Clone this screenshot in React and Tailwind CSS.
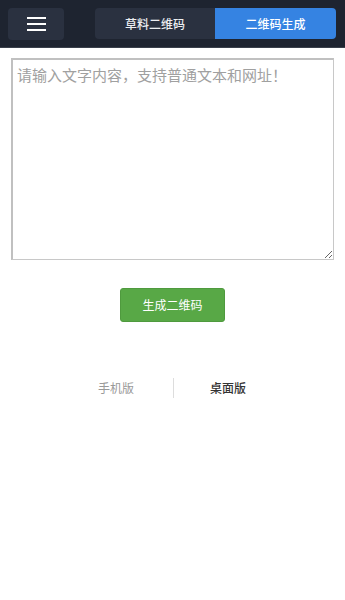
export default function App() {
  const font = { fontFamily: '"Noto Sans CJK SC", "Liberation Sans", sans-serif' };
  return (
    <div className="w-[345px] min-h-[600px] bg-white" style={font}>
      <div className="h-[48px] bg-[#1e2430] border-b border-[#3a404b] flex items-start pt-[8px] px-[8px]">
        <button className="w-[56px] h-[32px] rounded-[4px] bg-[#2a3140] flex flex-col items-center justify-center gap-[4px]">
          <span className="block w-[19px] h-[2px] bg-white"></span>
          <span className="block w-[19px] h-[2px] bg-white"></span>
          <span className="block w-[19px] h-[2px] bg-white"></span>
        </button>
        <div className="ml-[31px] flex h-[31px] rounded-[4px] overflow-hidden w-[241px]">
          <div className="w-[120px] bg-[#2a3140] text-[#eceef1] text-[12px] font-medium flex items-center justify-center">草料二维码</div>
          <div className="flex-1 bg-[#3583e2] text-white text-[12px] font-medium flex items-center justify-center">二维码生成</div>
        </div>
      </div>
      <div className="px-[11px] pt-[10px]">
        <textarea
          className="block w-[323px] h-[202px] border border-[#c8c8c8] border-l-[2px] border-t-[2px] border-l-[#c0c0c0] border-t-[#c0c0c0] px-[4px] py-[3px] text-[15px] leading-[24px] text-[#333] placeholder:text-[#a0a0a0] outline-none"
          placeholder="请输入文字内容，支持普通文本和网址！"
          style={font}
        />
      </div>
      <div className="flex justify-center pt-[28px]">
        <button className="w-[105px] h-[34px] rounded-[3px] bg-[#58a846] text-white text-[12px] border border-[#4f9a3e]">生成二维码</button>
      </div>
      <div className="flex items-center mt-[56px] pl-[59px] text-[12px]">
        <span className="w-[114px] text-center text-[#999]">手机版</span>
        <span className="w-px h-[20px] bg-[#ddd]"></span>
        <span className="w-[108px] text-center text-[#333] font-medium">桌面版</span>
      </div>
    </div>
  );
}
